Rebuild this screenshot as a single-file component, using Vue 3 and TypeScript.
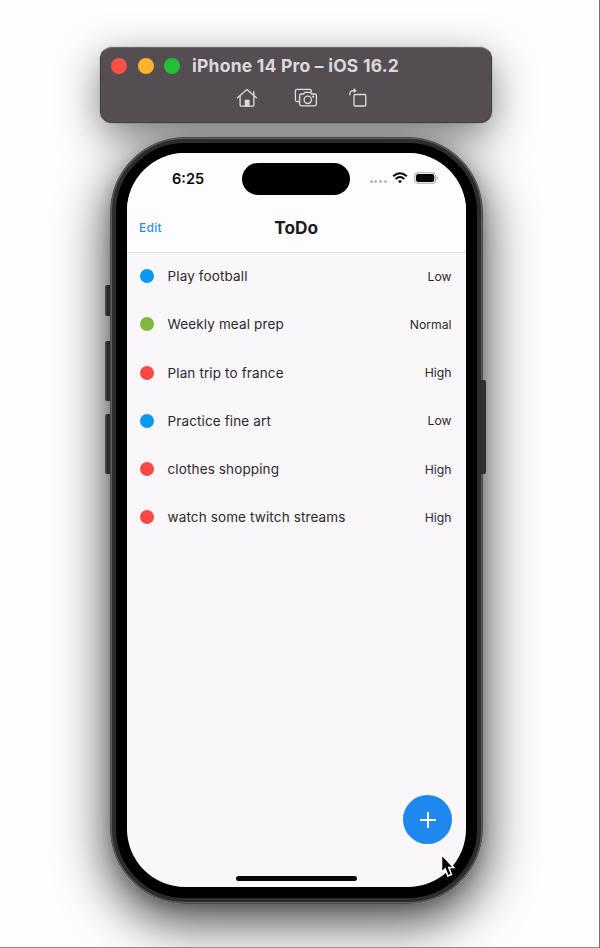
<script setup lang="ts">
interface Todo {
  title: string
  priority: 'Low' | 'Normal' | 'High'
}

const todos: Todo[] = [
  { title: 'Play football', priority: 'Low' },
  { title: 'Weekly meal prep', priority: 'Normal' },
  { title: 'Plan trip to france', priority: 'High' },
  { title: 'Practice fine art', priority: 'Low' },
  { title: 'clothes shopping', priority: 'High' },
  { title: 'watch some twitch streams', priority: 'High' },
]
</script>

<template>
  <main class="desktop">
    <header class="toolbar">
      <div class="title-row">
        <span class="light close"></span>
        <span class="light minimize"></span>
        <span class="light maximize"></span>
        <span class="window-title">iPhone 14 Pro – iOS 16.2</span>
      </div>
      <div class="actions">
        <svg class="home" width="22" height="20" viewBox="0 0 22 20" fill="none" stroke="#dedbde" stroke-width="1.3" stroke-linejoin="round" stroke-linecap="round">
          <path d="M1.500 9.800 11 1.600l9.500 8.200M4.100 8v8.900q0 1.200 1.200 1.200h11.400q1.200 0 1.200-1.200V8M17.800 6.800V3.600" />
          <path d="M9 18v-6h4.200v6z" fill="#dedbde" stroke-width=".6" />
        </svg>
        <svg class="camera" width="24" height="20" viewBox="0 0 24 20" fill="none" stroke="#dedbde" stroke-width="1.3" stroke-linejoin="round">
          <path d="M5 13.600H3.200Q1.400 13.600 1.400 11.800V3.200Q1.400 1.400 3.200 1.400H15.600Q17.400 1.400 17.400 3.200V4.200" />
          <path d="M7.400 6H9.500L10.800 4.300H16.300L17.600 6H20.600Q22.400 6 22.400 7.800V16.100Q22.400 17.900 20.600 17.900H7.400Q5.600 17.900 5.600 16.100V7.800Q5.600 6 7.400 6Z" />
          <circle cx="13.800" cy="11.800" r="3.700" />
          <circle cx="19.200" cy="8.700" r=".5" />
        </svg>
        <svg class="rotate" width="20" height="20" viewBox="0 0 20 20" fill="none" stroke="#dedbde" stroke-width="1.300" stroke-linejoin="round">
          <rect x="6" y="6.500" width="11.800" height="11.500" rx="1.300" />
          <path d="M1.800 7.200V6Q1.800 2.600 5.500 2.600H7.500" />
          <path d="M5.800.6 8.400 2.600 5.800 4.600Z" fill="#dedbde" stroke-width=".6" />
        </svg>
      </div>
    </header>

    <section class="phone">
      <span class="button mute"></span>
      <span class="button volume-up"></span>
      <span class="button volume-down"></span>
      <span class="button power"></span>
      <div class="bezel">
        <div class="screen">
          <div class="status-bar">
            <span class="clock">6:25</span>
            <span class="island"></span>
            <div class="indicators">
              <span class="cellular"><i v-for="n in 4" :key="n"></i></span>
              <svg class="wifi" width="16" height="12" viewBox="0 0 16 12" fill="none" stroke="#050507" stroke-width="2">
                <path d="M1.200 4.300Q8-1.700 14.800 4.300" />
                <path d="M3.600 6.900Q8 3.200 12.400 6.900" />
                <path d="M5.900 8.900Q8 7.400 10.100 8.900L8 11.200Z" fill="#050507" stroke="none" />
              </svg>
              <svg class="battery" width="25" height="12" viewBox="0 0 25 12">
                <rect x=".7" y=".7" width="20.800" height="10.600" rx="3.400" fill="none" stroke="#a9a9ad" stroke-width="1.100" />
                <rect x="2" y="2" width="18.200" height="8" rx="2.200" fill="#050507" />
                <path d="M22.700 4v4q1.300-.6 1.300-2t-1.300-2" fill="#a9a9ad" />
              </svg>
            </div>
          </div>

          <nav class="nav-bar">
            <button class="edit" type="button">Edit</button>
            <h1>ToDo</h1>
          </nav>

          <ul class="list">
            <li v-for="todo in todos" :key="todo.title">
              <span class="dot" :class="todo.priority.toLowerCase()"></span>
              <span class="name">{{ todo.title }}</span>
              <span class="priority">{{ todo.priority }}</span>
            </li>
          </ul>

          <footer class="bottom">
            <button class="add" type="button" aria-label="Add">
              <svg width="18" height="18" viewBox="0 0 18 18" stroke="#fff" stroke-width="2"><path d="M9 1v16M1 9h16" /></svg>
            </button>
            <span class="home-indicator"></span>
          </footer>
        </div>
      </div>
    </section>

    <svg class="cursor" width="16" height="26" viewBox="0 0 16 26">
      <path d="M1.500 1.500V19.200L5.200 15.900L7.900 23L11.500 21.500L8.800 14.600H13.800Z" fill="#050505" stroke="#fff" stroke-width="1.500" />
    </svg>
  </main>
</template>

<style>
body {
  margin: 0;
}
</style>

<style scoped>
.desktop {
  position: relative;
  isolation: isolate;
  box-sizing: border-box;
  width: 600px;
  height: 948px;
  padding: 47px 0 0 100px;
  overflow: hidden;
  background: #fdfcfe;
  border-right: 1px solid #77757a;
  border-bottom: 1px solid #8b898c;
  font-family: Inter, "Liberation Sans", sans-serif;
}

.toolbar {
  position: relative;
  box-sizing: border-box;
  width: 392px;
  height: 76px;
  padding: 9px 0 0 10px;
  border: 1px solid #413d42;
  border-top-color: #6c686d;
  border-radius: 12px;
  background: #544e53;
}

/* Shadows sit on their own layer so neither window darkens the other. */
.toolbar::before,
.phone::before {
  content: "";
  position: absolute;
  z-index: -1;
  inset: -1px;
  border-radius: inherit;
}

.toolbar::before {
  box-shadow: 0 0 1px #333, 0 13px 40px rgba(0, 0, 0, 0.5);
}

.phone::before {
  box-shadow: 0 16px 50px 3px rgba(0, 0, 0, 0.7), 0 4px 14px rgba(0, 0, 0, 0.16);
}

.title-row {
  display: flex;
  align-items: center;
  height: 18px;
}

.light {
  width: 16px;
  height: 16px;
  margin-right: 10.500px;
  border-radius: 50%;
}

.close { background: #ff5049; }
.minimize { background: #fdb32b; }
.maximize { background: #25bf37; }

.window-title {
  margin-left: 1.500px;
  color: #dcd8dc;
  font-size: 17.500px;
  font-weight: 700;
  letter-spacing: 0.230px;
  line-height: 18px;
  white-space: nowrap;
}

.actions {
  display: flex;
  padding: 13px 0 0 125px;
}

.camera { margin-left: 36px; }
.rotate { margin-left: 30px; }

.phone {
  position: relative;
  box-sizing: border-box;
  width: 373px;
  height: 767px;
  margin: 14px 0 0 9.500px;
  padding: 1px;
  border: 1px solid #4b494c;
  border-radius: 75px;
  background: #5f5d61;
}

.bezel {
  position: relative;
  box-sizing: border-box;
  height: 100%;
  padding: 10px 10.500px 11px 11px;
  border: 4px solid #2c2b2e;
  border-radius: 73px;
  background: #000;
}

.button {
  position: absolute;
  left: -5.500px;
  width: 5px;
  border-radius: 2px 0 0 2px;
  background: linear-gradient(90deg, #555357, #29282b 50%);
}

.mute { top: 147px; height: 31px; }
.volume-up { top: 203px; height: 60px; }
.volume-down { top: 276px; height: 60px; }
.power {
  top: 242px;
  left: auto;
  right: -4.500px;
  height: 94px;
  border-radius: 0 2px 2px 0;
  background: #302f31;
}

.screen {
  display: flex;
  flex-direction: column;
  box-sizing: border-box;
  height: 100%;
  overflow: hidden;
  border-radius: 58px;
  background: #f9f7fa;
  color: #2b292d;
}

.status-bar {
  display: grid;
  grid-template-columns: 115px 108px 1fr;
  height: 51px;
  padding-top: 9.500px;
  box-sizing: border-box;
  background: #fdfcfe;
}

.clock {
  padding-left: 45.500px;
  color: #09080a;
  font-size: 14.500px;
  font-weight: 600;
  line-height: 31px;
}

.island {
  height: 32px;
  border-radius: 16px;
  background: #000;
}

.indicators {
  display: flex;
  align-items: center;
  height: 31px;
  padding-left: 20px;
}

.cellular {
  display: flex;
  gap: 1.700px;
  margin-top: 7px;
}

.cellular i {
  width: 3px;
  height: 3px;
  border-radius: 50%;
  background: #bbb9bd;
}

.wifi { margin-left: 5.500px; }
.battery { margin-left: 5.500px; }

.nav-bar {
  display: grid;
  grid-template-columns: 80px 1fr 80px;
  align-items: center;
  box-sizing: border-box;
  height: 49px;
  padding-bottom: 1px;
  border-bottom: 1px solid #dedde0;
  background: #fdfcfe;
}

.edit {
  padding: 0 0 0 12.500px;
  border: 0;
  background: none;
  color: #318fe0;
  font: 500 12px Inter, sans-serif;
  letter-spacing: 0.250px;
  text-align: left;
}

h1 {
  margin: 0;
  color: #1d1b1f;
  font-size: 17.300px;
  font-weight: 700;
  text-align: center;
}

.list {
  margin: -1px 0 0;
  padding: 0;
  list-style: none;
}

.list li {
  display: flex;
  align-items: center;
  height: 48.250px;
  padding: 0 14.500px 0 13.500px;
}

.dot {
  width: 14px;
  height: 14px;
  margin-right: 13.500px;
  border-radius: 50%;
}

.low { background: #0799ee; }
.normal { background: #7fb83f; }
.high { background: #ff4744; }

.name {
  flex: 1;
  font-size: 13.500px;
  letter-spacing: 0.130px;
}

.priority { font-size: 12.200px; }

.bottom {
  display: flex;
  flex-direction: column;
  align-items: center;
  margin-top: auto;
  padding-bottom: 6.500px;
}

.add {
  display: grid;
  place-items: center;
  align-self: flex-end;
  width: 49px;
  height: 49px;
  margin: 0 14px 32px 0;
  padding: 0;
  border: 0;
  border-radius: 50%;
  background: #1e88ee;
}

.home-indicator {
  width: 121px;
  height: 4.500px;
  border-radius: 3px;
  background: #050506;
}

.cursor {
  position: absolute;
  top: 853px;
  left: 440px;
}
</style>
